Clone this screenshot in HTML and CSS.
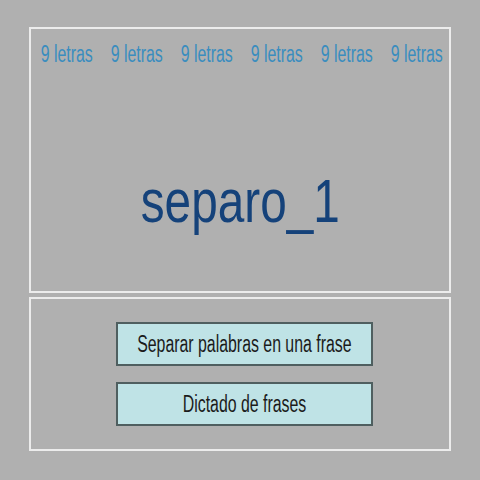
FILE: index.html
```html
<!DOCTYPE html>
<html lang="es">
<head>
  <meta charset="UTF-8" />
  <title>separo_1</title>
  <link rel="stylesheet" href="styles.css">
</head>
<body>
  <div class="screen">
    <div class="panel top">
      <div class="words">
        <span class="narrow">9 letras</span>
        <span class="narrow">9 letras</span>
        <span class="narrow">9 letras</span>
        <span class="narrow">9 letras</span>
        <span class="narrow">9 letras</span>
        <span class="narrow">9 letras</span>
      </div>
      <div class="title"><span class="narrow">separo_1</span></div>
    </div>
    <div class="panel bottom">
      <button class="option"><span class="narrow">Separar palabras en una frase</span></button>
      <button class="option"><span class="narrow">Dictado de frases</span></button>
    </div>
  </div>
</body>
</html>
```

FILE: styles.css
```css
body {
  margin: 0;
  background: #b0b0b0;
  font-family: "Liberation Sans", Arial, sans-serif;
}
.screen {
  display: flex;
  flex-direction: column;
  gap: 4px;
  padding: 27px 29px 0 29px;
  width: 422px;
}
.panel {
  border: 2px solid #ececec;
  box-sizing: border-box;
}
/* condensed lettering */
.narrow {
  display: inline-block;
  white-space: nowrap;
  transform: scaleX(0.74);
  transform-origin: center;
}
.top {
  height: 266px;
  display: flex;
  flex-direction: column;
}
.words {
  display: grid;
  grid-template-columns: repeat(6, 70px);
  justify-content: start;
  justify-items: center;
  padding: 14px 0 0 1px;
  color: #3a8dbf;
  font-size: 23px;
  line-height: 23px;
}
.words .narrow {
  transform: scaleX(0.69);
}
.title {
  text-align: center;
  color: #15427a;
  font-size: 62px;
  line-height: 62px;
  margin-top: 104px;
  padding-left: 1px;
}
.title .narrow {
  transform: scaleX(0.77);
}
.bottom {
  height: 154px;
  display: flex;
  flex-direction: column;
  align-items: center;
  gap: 16px;
  padding: 23px 0 0 8px;
}
.option {
  display: flex;
  align-items: center;
  justify-content: center;
  width: 257px;
  height: 44px;
  padding: 0 0 0 1px;
  background: #bfe3e6;
  border: 2px solid #4f5f60;
  font-family: inherit;
  font-size: 23px;
  color: #1b1b1b;
  cursor: pointer;
}
.option .narrow {
  transform: scaleX(0.69);
}
```
